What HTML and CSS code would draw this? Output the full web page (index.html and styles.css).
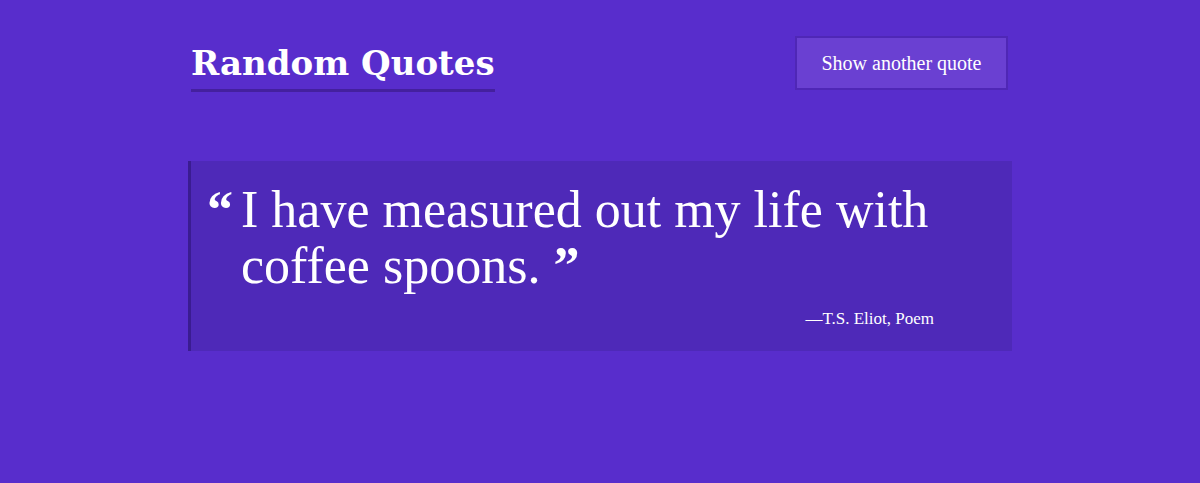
FILE: index.html
```html
<!DOCTYPE html>
<html lang="en">
<head>
<meta charset="utf-8">
<title>Random Quotes</title>
<link rel="stylesheet" href="styles.css">
</head>
<body>
<div class="container">
  <header class="header">
    <h1 class="title">Random Quotes</h1>
    <button class="btn" type="button">Show another quote</button>
  </header>
  <blockquote class="quote">
    <div class="quote-body">
      <span class="mark-open">&ldquo;</span>
      <p class="quote-text">I have measured out my life with coffee spoons.&nbsp;<span class="mark-close">&rdquo;</span></p>
    </div>
    <p class="quote-source">&mdash;T.S. Eliot, Poem</p>
  </blockquote>
</div>
</body>
</html>
```
FILE: styles.css
```css
html, body {
  margin: 0;
  padding: 0;
}
body {
  background: #582dcc;
  color: #ffffff;
  font-family: "Liberation Serif", "DejaVu Serif", serif;
}
.container {
  width: 824px;
  margin: 0 auto;
}
.header {
  display: flex;
  justify-content: space-between;
  align-items: flex-start;
  padding: 36px 4px 0 3px;
}
.title {
  margin: 7px 0 0 0;
  font-family: "DejaVu Serif", "Liberation Serif", serif;
  font-size: 34px;
  font-weight: bold;
  line-height: 40px;
  padding-bottom: 6px;
  border-bottom: 3px solid #44209e;
}
.btn {
  font-family: inherit;
  font-size: 20px;
  color: #ffffff;
  background: #6a40d2;
  border: 2px solid #4f27b6;
  height: 54px;
  width: 213px;
  padding: 0;
  cursor: pointer;
}
.quote {
  margin: 69px 0 0 0;
  background: #4e29b8;
  border-left: 3px solid #3a1c91;
  padding: 21px 60px 22px 16px;
}
.quote-body {
  display: flex;
  gap: 8px;
}
.mark-open {
  font-size: 52px;
  line-height: 56px;
  font-weight: bold;
}
.quote-text {
  margin: 0;
  font-size: 52px;
  line-height: 56px;
}
.mark-close {
  font-weight: bold;
}
.quote-source {
  margin: 15px 18px 0 0;
  text-align: right;
  font-size: 17px;
  line-height: 20px;
}
```
